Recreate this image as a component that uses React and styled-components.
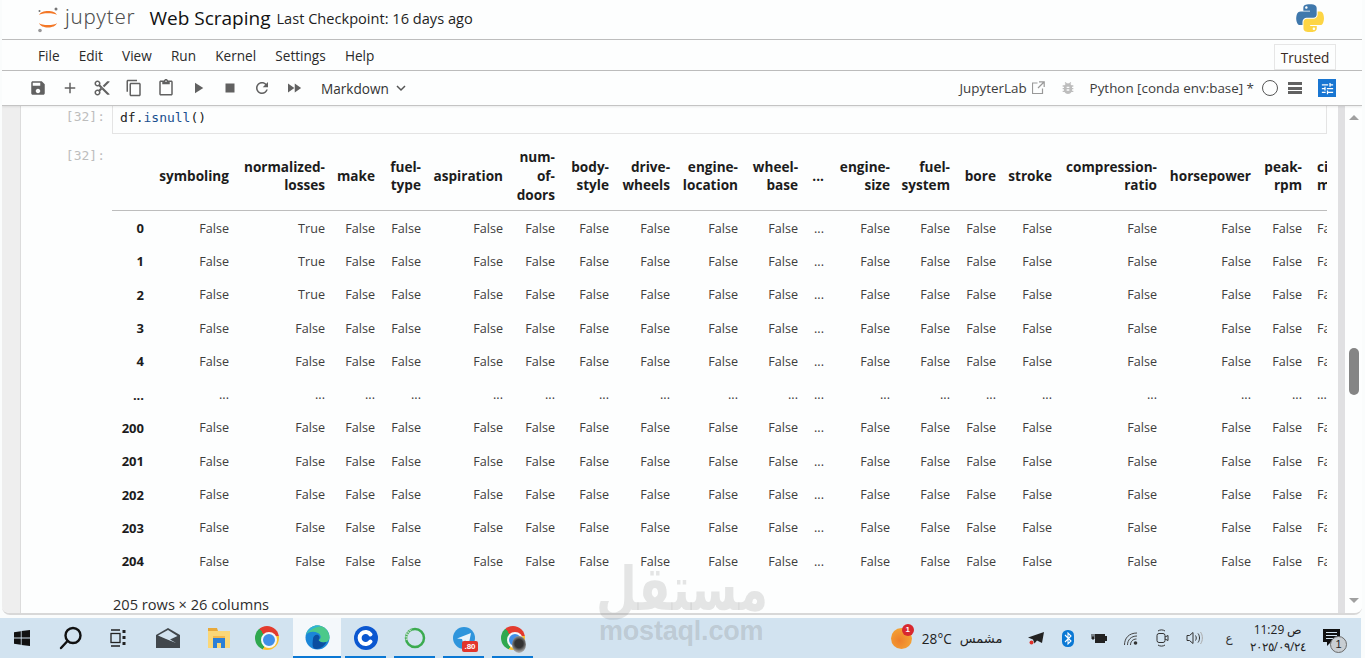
import React from 'react';
import styled, { createGlobalStyle } from 'styled-components';

const Global = createGlobalStyle`
  html, body { margin: 0; padding: 0; background: #fdfefe; overflow: hidden; }
  #root { width: 1365px; height: 658px; }
  * { box-sizing: border-box; }
`;

const UI = `"Open Sans", "Noto Sans", "Liberation Sans", sans-serif`;
const MONO = `"DejaVu Sans Mono", "Liberation Mono", monospace`;
const AR = `"DejaVu Sans", "Liberation Sans", sans-serif`;

const Page = styled.div`
  position: relative; width: 1365px; height: 658px; display: flex; flex-direction: column;
  overflow: hidden; font-family: ${UI}; background: #fafcfc;
`;
const Frame = styled.div`
  height: 615px; margin: 0 3px 3px 2px; display: flex; flex-direction: column; background: #fdfefe;
  border-bottom: 2px solid #d8d8d8; border-radius: 0 0 8px 8px; overflow: hidden; flex: none;
`;
const Header = styled.header`
  height: 40px; flex: none; display: flex; align-items: center; padding: 0 40px 4px 34px;
  border-bottom: 1px solid #bdbdbd;
`;
const LogoMark = styled.svg`width: 24px; height: 28px; margin-top: 3px; flex: none;`;
const LogoWord = styled.span`
  font-family: "Noto Sans", sans-serif; font-size: 20.5px; font-weight: 300; color: #4e4e4e; letter-spacing: .8px;
  margin-left: 5px; margin-top: -3px;
`;
const Title = styled.span`font-size: 19px; color: #111; margin-left: 14px; white-space: nowrap;`;
const Checkpoint = styled.span`font-size: 14.6px; color: #1f1f1f; margin-left: 6px; white-space: nowrap;`;
const PyLogo = styled.svg`width: 28px; height: 28px; margin-left: auto; margin-right: -2px;`;

const MenuBar = styled.nav`
  height: 31px; flex: none; display: flex; align-items: center; padding-left: 36px;
  border-bottom: 1px solid #bdbdbd; position: relative;
`;
const MenuItem = styled.span`font-size: 13.6px; color: #2a2a2a; margin-right: 19.2px;`;
const TrustedBox = styled.span`
  margin-left: auto; margin-right: 26px; margin-top: 4px; height: 26px; width: 62px; display: flex; align-items: center; justify-content: center;
  border: 1px solid #e6e6e6; font-size: 13.6px; color: #3a2a22; background: #fdfefe; position: relative; z-index: 1;
`;

const Toolbar = styled.div`
  height: 35px; flex: none; display: flex; align-items: center; padding: 0 26px 0 20px;
  border-bottom: 1px solid #c4c4c4; box-shadow: 0 1px 2px rgba(0,0,0,.08); position: relative; z-index: 2; background: #fdfefe;
`;
const ToolBtn = styled.span`width: 32px; height: 32px; display: flex; align-items: center; justify-content: center; flex: none;`;
const MatIcon = styled.svg`width: ${p => p.$s || 18}px; height: ${p => p.$s || 18}px; fill: ${p => p.$c || '#616161'}; flex: none;`;
const CellType = styled.span`font-size: 13.6px; color: #333; margin-left: 11px; display: flex; align-items: center; gap: 6px;`;
const Chevron = styled.svg`width: 12px; height: 12px; fill: none; stroke: #555; stroke-width: 1.5;`;
const ToolRight = styled.div`margin-left: auto; display: flex; align-items: center;`;
const KernelText = styled.span`font-size: 13.4px; color: #3c3c3c; white-space: nowrap; margin-left: ${p => p.$ml || 0}px;`;
const ExtIcon = styled.svg`width: 13px; height: 13px; margin: 0 15px 2px 5px; fill: none; stroke: #999; stroke-width: 1.2;`;
const StatusCircle = styled.span`width: 16px; height: 16px; border: 1.5px solid #555; border-radius: 50%; margin: 0 0 0 8px;`;
const Stack = styled.span`width: 14px; height: 12px; margin-left: 10px; display: flex; flex-direction: column; justify-content: space-between;`;
const StackBar = styled.i`display: block; height: 3px; background: #616161;`;
const Tune = styled.span`width: 18px; height: 18px; margin-left: 16px; background: #1976d2; display: flex; align-items: center; justify-content: center;`;

const Main = styled.main`flex: 1; min-height: 0; display: flex;`;
const GutterLeft = styled.div`width: 19px; flex: none; background: #eeeeee; border-right: 1px solid #dcdcdc; `;
const Sheet = styled.div`width: 1317px; flex: none; background: #fdfefe; position: relative; padding: 0 0 0 91px; overflow: hidden;`;
const GutterRight = styled.div`width: 7px; flex: none; background: #e0e0e2; `;
const Scrollbar = styled.div`flex: 1; background: #fdfefe; display: flex; flex-direction: column; align-items: center; padding: 9px 0 10px 0;`;
const ArrowUp = styled.i`width: 0; height: 0; border: 5px solid transparent; border-top: 0; border-bottom: 5px solid #a0a0a0;`;
const ArrowDown = styled.i`width: 0; height: 0; border: 5px solid transparent; border-bottom: 0; border-top: 5px solid #a0a0a0; margin-top: auto;`;
const Thumb = styled.i`width: 10px; height: 47px; background: #858585; border-radius: 5px; margin-top: 228px;`;

const Row = styled.div`display: flex; position: relative;`;
const Prompt = styled.span`
  position: absolute; right: calc(100% + 7px); top: ${p => p.$top}px;
  font: 13px/16px ${MONO}; color: #bdbdbd; white-space: nowrap;
`;
const InputBox = styled.div`
  width: 1215px; height: 28px; border: 1px solid #e4e4e4; border-top: 0; display: flex; align-items: center; padding: 0 0 4px 7px;
  font: 13px ${MONO}; color: #222; background: #fdfefe;
`;
const Method = styled.span`color: #1a4f8f;`;
const Output = styled.div`margin-top: 12px; width: 1215px; overflow: hidden; position: relative;`;
const Table = styled.table`border-collapse: collapse; table-layout: fixed; width: 1255px;`;
const Th = styled.th`
  padding: 0 5px 3px 0; text-align: ${p => p.$left ? 'left' : 'right'}; ${p => p.$left ? 'padding-left: 10px;' : ''}
  font-size: 13.6px; line-height: 18.6px; font-weight: 700; color: #1c1c1c; vertical-align: middle;
  height: 64px; border-bottom: 1px solid #bdbdbd; overflow: hidden;
`;
const Td = styled.td`
  padding: 3px 5px 0 0; text-align: ${p => p.$left ? 'left' : 'right'}; ${p => p.$left ? 'padding-left: 10px;' : ''}
  font-size: 12.6px; color: #3d3d3d; white-space: nowrap; overflow: hidden; height: 33.3px;
`;
const RowHead = styled(Td)`font-weight: 700; color: #1c1c1c; font-size: 13px;`;
const Shape = styled.div`
  margin: 18px 0 0 1px; font-size: 14.6px; color: #2d2d2d; line-height: 20px;
`;
const Mark = styled.div`
  position: absolute; left: 598px; top: 561px; width: 170px; z-index: 5; pointer-events: none; text-align: center; direction: rtl;
  font-family: ${AR}; font-weight: 700; font-size: 47px; line-height: 64px; color: rgba(130,130,130,.2); white-space: nowrap;
  transform: scaleY(1.3); transform-origin: 50% 70%;
`;
const MarkLatin = styled.div`
  position: absolute; left: 599px; top: 618px; width: 170px; z-index: 5; pointer-events: none;
  font-family: "Liberation Sans", sans-serif; font-weight: 700; font-size: 27px; line-height: 26px; color: rgba(120,120,120,.24); white-space: nowrap; letter-spacing: -.2px;
`;

const Taskbar = styled.footer`
  height: 40px; margin-right: 4px; flex: none; background: #d2e3f0; display: flex; align-items: stretch;
`;
const Slot = styled.div`
  width: ${p => p.$w || 49}px; flex: none; display: flex; align-items: center; justify-content: center; position: relative; padding-bottom: 1px;
  background: ${p => p.$active ? '#f4f8fb' : 'transparent'};
  &::after { content: ''; display: ${p => p.$line ? 'block' : 'none'}; position: absolute; bottom: 0; left: ${p => p.$active ? 0 : 4}px; right: ${p => p.$active ? 0 : 4}px; height: 2px; background: #0a78d4; }
`;
const Ico = styled.svg`width: ${p => p.$w || 24}px; height: ${p => p.$h || p.$w || 24}px; flex: none;`;
const ChromeBall = styled.span`
  width: 24px; height: 24px; border-radius: 50%; position: relative; display: block;
  background: conic-gradient(#e33b2e 0 80deg, #fbc02d 80deg 200deg, #2fa84f 200deg 320deg, #e33b2e 320deg);
  &::after { content: ''; position: absolute; left: 6px; top: 6px; width: 12px; height: 12px; border-radius: 50%; background: #3f8ee8; border: 2px solid #f3f7fa; }
`;
const AvatarDot = styled.span`position: absolute; left: 24px; top: 18px; width: 14px; height: 17px; border-radius: 50%; background: radial-gradient(circle at 50% 45%, #333 0 35%, #8a8a8a 62%, #ececec 100%);`;
const TgBadge = styled.span`
  position: absolute; left: 23px; top: 23px; width: 16px; height: 11px; background: #e2352d; color: #fff; border-radius: 2px;
  font: 700 8px/11px "Liberation Sans", sans-serif; text-align: center;
`;
const Tray = styled.div`margin-left: auto; display: flex; align-items: center; position: relative; padding-right: 5px;`;
const WeatherIcon = styled.span`
  width: 21px; height: 21px; border-radius: 50%; background: radial-gradient(circle at 40% 60%, #ee7f2a, #f6b23a); position: relative; display: block; margin-right: 10px;
`;
const WeatherBadge = styled.span`
  position: absolute; left: 11px; top: -4px; width: 12px; height: 12px; border-radius: 50%; background: #d8282f; color: #fff;
  font: 700 8px/12px "Liberation Sans", sans-serif; text-align: center;
`;
const TrayText = styled.span`font-size: 13.6px; color: #222; white-space: nowrap;`;
const ArText = styled.span`font-family: ${AR}; font-size: 13px; color: #222; white-space: nowrap; margin-left: 8px; margin-right: 18px; direction: rtl;`;
const TrayIcon = styled.span`width: 31.6px; display: flex; justify-content: center; flex: none;`;
const Lang = styled.span`font-family: ${AR}; font-size: 12px; color: #333; width: 30px; text-align: center; margin-left: 4px;`;
const Clock = styled.div`
  width: 56px; margin-left: 6px; display: flex; flex-direction: column; align-items: center; font-size: 12px; line-height: 17px; color: #222; font-family: ${UI};
`;
const Notify = styled.span`width: 50px; height: 100%; display: flex; align-items: center; justify-content: center; position: relative;`;
const NotifyBadge = styled.span`
  position: absolute; left: 24px; top: 18px; width: 17px; height: 17px; border-radius: 50%; background: #c8ced3; border: 1px solid #6a6a6a; color: #222;
  font: 11px/15px "Liberation Sans", sans-serif; text-align: center;
`;

const P = {
  save: 'M17 3H5c-1.11 0-2 .9-2 2v14c0 1.1.89 2 2 2h14c1.1 0 2-.9 2-2V7l-4-4zm-5 16c-1.66 0-3-1.34-3-3s1.34-3 3-3 3 1.34 3 3-1.34 3-3 3zm3-10H5V5h10v4z',
  add: 'M19 13h-6v6h-2v-6H5v-2h6V5h2v6h6v2z',
  cut: 'M9.64 7.64c.23-.5.36-1.05.36-1.64 0-2.21-1.79-4-4-4S2 3.79 2 6s1.79 4 4 4c.59 0 1.14-.13 1.64-.36L10 12l-2.36 2.36C7.14 14.13 6.59 14 6 14c-2.21 0-4 1.79-4 4s1.79 4 4 4 4-1.79 4-4c0-.59-.13-1.14-.36-1.64L12 14l7 7h3v-1L9.64 7.64zM6 8c-1.1 0-2-.89-2-2s.9-2 2-2 2 .89 2 2-.9 2-2 2zm0 12c-1.1 0-2-.89-2-2s.9-2 2-2 2 .89 2 2-.9 2-2 2zm6-7.5c-.28 0-.5-.22-.5-.5s.22-.5.5-.5.5.22.5.5-.22.5-.5.5zM19 3l-6 6 2 2 7-7V3z',
  copy: 'M16 1H4c-1.1 0-2 .9-2 2v14h2V3h12V1zm3 4H8c-1.1 0-2 .9-2 2v14c0 1.1.9 2 2 2h11c1.1 0 2-.9 2-2V7c0-1.1-.9-2-2-2zm0 16H8V7h11v14z',
  paste: 'M19 2h-4.18C14.4.84 13.3 0 12 0c-1.3 0-2.4.84-2.82 2H5c-1.1 0-2 .9-2 2v16c0 1.1.9 2 2 2h14c1.1 0 2-.9 2-2V4c0-1.1-.9-2-2-2zm-7 0c.55 0 1 .45 1 1s-.45 1-1 1-1-.45-1-1 .45-1 1-1zm7 18H5V4h2v3h10V4h2v16z',
  play: 'M8 5v14l11-7z',
  stop: 'M6 6h12v12H6z',
  refresh: 'M17.65 6.35C16.2 4.9 14.21 4 12 4c-4.42 0-7.99 3.58-7.99 8s3.57 8 7.99 8c3.73 0 6.84-2.55 7.73-6h-2.08c-.82 2.33-3.04 4-5.65 4-3.31 0-6-2.69-6-6s2.69-6 6-6c1.66 0 3.14.69 4.22 1.78L13 11h7V4l-2.35 2.35z',
  ff: 'M4 18l8.5-6L4 6v12zm9-12v12l8.5-6L13 6z',
  bug: 'M20 8h-2.81c-.45-.78-1.07-1.45-1.82-1.96L17 4.41 15.59 3l-2.17 2.17C12.96 5.06 12.49 5 12 5c-.49 0-.96.06-1.41.17L8.41 3 7 4.41l1.62 1.63C7.88 6.55 7.26 7.22 6.81 8H4v2h2.09c-.05.33-.09.66-.09 1v1H4v2h2v1c0 .34.04.67.09 1H4v2h2.81c1.04 1.79 2.97 3 5.19 3s4.15-1.21 5.19-3H20v-2h-2.09c.05-.33.09-.66.09-1v-1h2v-2h-2v-1c0-.34-.04-.67-.09-1H20V8zm-6 8h-4v-2h4v2zm0-4h-4v-2h4v2z',
  tune: 'M3 17v2h6v-2H3zM3 5v2h10V5H3zm10 16v-2h8v-2h-8v-2h-2v6h2zM7 9v2H3v2h4v2h2V9H7zm14 4v-2H11v2h10zm-6-4h2V7h4V5h-4V3h-2v6z',
};
const Mi = ({ n, s, c }) => <MatIcon viewBox="0 0 24 24" $s={s} $c={c}><path d={P[n]} /></MatIcon>;

const columns = [
  ['', 37], ['symboling', 85], [['normalized-', 'losses'], 96], ['make', 50], [['fuel-', 'type'], 46], ['aspiration', 82],
  [['num-', 'of-', 'doors'], 52], [['body-', 'style'], 54], [['drive-', 'wheels'], 61], [['engine-', 'location'], 68], [['wheel-', 'base'], 60],
  ['...', 26], [['engine-', 'size'], 66], [['fuel-', 'system'], 60], ['bore', 46], ['stroke', 56], [['compression-', 'ratio'], 105],
  ['horsepower', 94], [['peak-', 'rpm'], 51], [['city-', 'mpg'], 60],
];
const rows = ['0', '1', '2', '3', '4', '...', '200', '201', '202', '203', '204'];
const cellValue = (r, c) => {
  if (r === '...' || c === 11) return '...';
  if (c === 2 && (r === '0' || r === '1' || r === '2')) return 'True';
  return 'False';
};

const Label = ({ v }) => Array.isArray(v) ? v.map((l, i) => <React.Fragment key={i}>{l}{i < v.length - 1 && <br />}</React.Fragment>) : v;

const Jupyter = () => (
  <LogoMark viewBox="0 0 24 28">
    <path d="M3 10C5 4.500 19 4.500 21 10 18.500 7.800 5.500 7.800 3 10Z" fill="#f37726" />
    <path d="M3 18C5 24 19 24 21 18 18.500 20.800 5.500 20.800 3 18Z" fill="#f37726" />
    <circle cx="20" cy="4" r="1.500" fill="#767677" /><circle cx="4" cy="25.500" r="1.800" fill="#989798" /><circle cx="3.500" cy="6" r="1" fill="#6f7070" />
  </LogoMark>
);

const Python = () => (
  <PyLogo viewBox="0 0 110 110">
    <path fill="#3f78ac" d="M54.9.9c-4.6 0-8.9.4-12.8 1.1C30.8 4 28.8 8.2 28.8 15.9v10.2h26.2v3.4H19c-7.6 0-14.3 4.6-16.4 13.3C.2 52.8.1 59 2.6 69.4c1.9 7.7 6.3 13.3 13.9 13.3h9v-12c0-8.7 7.5-16.3 16.4-16.3h26.2c7.3 0 13.1-6 13.1-13.3V15.9c0-7.1-6-12.4-13.1-13.6C63.5 1.3 59.1.9 54.9.9zM40.7 9c2.7 0 4.9 2.2 4.9 5 0 2.7-2.2 4.9-4.9 4.9-2.7 0-4.9-2.2-4.9-4.9 0-2.7 2.2-5 4.9-5z" />
    <path fill="#fdd545" d="M85 29.5v11.6c0 9-7.6 16.6-16.4 16.6H42.4c-7.2 0-13.1 6.1-13.1 13.3v25c0 7.1 6.2 11.3 13.1 13.3 8.3 2.4 16.3 2.9 26.2 0 6.6-1.9 13.1-5.8 13.1-13.3V86H55.5v-3.4h39.3c7.6 0 10.5-5.3 13.1-13.3 2.7-8.2 2.6-16.1 0-26.6C106 35.2 102.4 29.5 94.8 29.5H85zM70.3 92.5c2.7 0 4.9 2.2 4.9 4.9 0 2.7-2.2 5-4.9 5-2.7 0-4.9-2.2-4.9-5 0-2.7 2.2-4.9 4.9-4.900z" />
  </PyLogo>
);

export default function App() {
  return (
    <Page>
      <Global />
      <Frame>
        <Header>
          <Jupyter />
          <LogoWord>jupyter</LogoWord>
          <Title>Web Scraping</Title>
          <Checkpoint>Last Checkpoint: 16 days ago</Checkpoint>
          <Python />
        </Header>
        <MenuBar>
          {['File', 'Edit', 'View', 'Run', 'Kernel', 'Settings', 'Help'].map(m => <MenuItem key={m}>{m}</MenuItem>)}
          <TrustedBox>Trusted</TrustedBox>
        </MenuBar>
        <Toolbar>
          <ToolBtn><Mi n="save" /></ToolBtn>
          <ToolBtn><Mi n="add" /></ToolBtn>
          <ToolBtn><Mi n="cut" /></ToolBtn>
          <ToolBtn><Mi n="copy" /></ToolBtn>
          <ToolBtn><Mi n="paste" /></ToolBtn>
          <ToolBtn><Mi n="play" /></ToolBtn>
          <ToolBtn><Mi n="stop" /></ToolBtn>
          <ToolBtn><Mi n="refresh" /></ToolBtn>
          <ToolBtn><Mi n="ff" /></ToolBtn>
          <CellType>Markdown<Chevron viewBox="0 0 12 12"><path d="M2 4l4 4 4-4" /></Chevron></CellType>
          <ToolRight>
            <KernelText>JupyterLab</KernelText>
            <ExtIcon viewBox="0 0 13 13"><path d="M10.5 7.5v5h-10V2h5M7 .8h5.2V6M12 1 6 7" /></ExtIcon>
            <Mi n="bug" s={16} c="#bdbdbd" />
            <KernelText $ml={14}>Python [conda env:base] *</KernelText>
            <StatusCircle />
            <Stack><StackBar /><StackBar /><StackBar /></Stack>
            <Tune><Mi n="tune" s={15} c="#fff" /></Tune>
          </ToolRight>
        </Toolbar>
        <Main>
          <GutterLeft />
          <Sheet>
            <Row>
              <Prompt $top={3}>[32]:</Prompt>
              <InputBox>df.<Method>isnull</Method>()</InputBox>
            </Row>
            <Row>
              <Prompt $top={14}>[32]:</Prompt>
              <div>
                <Output>
                  <Table>
                    <colgroup>{columns.map((c, i) => <col key={i} style={{ width: c[1] }} />)}</colgroup>
                    <thead>
                      <tr>{columns.map((c, i) => <Th key={i} $left={i === 19}><Label v={c[0]} /></Th>)}</tr>
                    </thead>
                    <tbody>
                      {rows.map(r => (
                        <tr key={r}>
                          <RowHead as="td">{r}</RowHead>
                          {columns.slice(1).map((c, i) => <Td key={i} $left={i === 18}>{cellValue(r, i + 1)}</Td>)}
                        </tr>
                      ))}
                    </tbody>
                  </Table>
                </Output>
                <Shape>205 rows × 26 columns</Shape>
              </div>
            </Row>
          </Sheet>
          <GutterRight />
          <Scrollbar><ArrowUp /><Thumb /><ArrowDown /></Scrollbar>
        </Main>
      </Frame>
      <Taskbar>
        <Slot $w={44}>
          <Ico $w={16} viewBox="0 0 16 16" fill="#111"><path d="M0 2.200 6.800 1.200v6.400H0zM7.600 1.100 16 0v7.600H7.600zM0 8.400h6.800v6.400L0 13.800zM7.600 8.400H16V16l-8.400-1.100z" /></Ico>
        </Slot>
        <Slot $w={54}>
          <Ico $w={26} viewBox="0 0 26 26" fill="none" stroke="#111" strokeWidth="2.400"><circle cx="15" cy="10.500" r="7.500" /><path d="M9.500 16 3 23" strokeLinecap="round" /></Ico>
        </Slot>
        <Slot $w={40}>
          <Ico $w={18} viewBox="0 0 18 18" fill="none" stroke="#222" strokeWidth="1.300"><path d="M2 1h9M2 17h9" /><rect x="2" y="4.500" width="9" height="9" /><rect x="13.500" y="1" width="3" height="3" fill="#222" stroke="none" /><rect x="13.500" y="7" width="3" height="3" fill="#222" stroke="none" /><rect x="13.500" y="13" width="3" height="3" fill="#222" stroke="none" /></Ico>
        </Slot>
        <Slot $w={60}>
          <Ico $w={24} $h={20} viewBox="0 0 24 20"><path d="M0 7 12 0l12 7v13H0z" fill="#41474c" /><path d="M2 7.500 12 2l9.500 6L14 11.500 20 15 10 11z" fill="#d2e3f0" /><path d="M1 8l10 4 9 4H1z" fill="#41474c" /></Ico>
        </Slot>
        <Slot $w={42}>
          <Ico $w={22} $h={20} viewBox="0 0 22 20"><path d="M0 0h9l1 3h12v17H0z" fill="#e8a93a" /><path d="M0 3h22v17H0z" fill="#fbd777" /><path d="M5 10h12v10h-4v-5H9v5H5z" fill="#2c7fd6" /><path d="M5 8h12v2H5z" fill="#f5b84a" /></Ico>
        </Slot>
        <Slot $w={53}><ChromeBall /></Slot>
        <Slot $active $line $w={48}>
          <Ico $w={25} viewBox="0 0 25 25">
            <circle cx="12.500" cy="12.500" r="12" fill="#1b86d8" />
            <path d="M1 10C3 3 8 .5 12.500.5 19 .5 24.500 6 24.500 12.500c0 3-3 5-6 5-2.500 0-5-1-5-2.500 3-1 3-5-.5-7C9 6 3 6.500 1 10z" fill="#4cc98a" />
            <path d="M1 10C3 3 8 .5 12.500.5c2 0 3 .3 4 .8C13 1.500 6 3 1 10z" fill="#2fb3d8" />
            <path d="M8 14c0-3 3-5 5-4 2 1 2 3.500.5 5 1 2 4 3 8 2-2 4-6 7-10 7-5 0-4-6-3.500-10z" fill="#0c4fa0" />
          </Ico>
        </Slot>
        <Slot $line>
          <Ico $w={24} viewBox="0 0 24 24"><circle cx="12" cy="12" r="12" fill="#0b57d0" /><path d="M16.500 8.500a6 6 0 1 0 0 7" fill="none" stroke="#fff" strokeWidth="4" strokeLinecap="round" /></Ico>
        </Slot>
        <Slot $line>
          <Ico $w={22} viewBox="0 0 22 22" fill="none"><circle cx="11" cy="11" r="9" stroke="#3bab4f" strokeWidth="2.500" /><path d="M3 13C1.500 8 4 3.500 8 2.500" stroke="#b8d8be" strokeWidth="2.500" strokeDasharray="1.500 1" /></Ico>
        </Slot>
        <Slot $line>
          <Ico $w={22} viewBox="0 0 22 22"><circle cx="11" cy="11" r="11" fill="#2f95dc" /><path d="M4 11.500 18 6l-2 10-4-2.500-2 2-1-3.500z" fill="#eaf4fb" /></Ico>
          <TgBadge>.80</TgBadge>
        </Slot>
        <Slot $line><ChromeBall /><AvatarDot /></Slot>
        <Tray>
          <WeatherIcon><WeatherBadge>1</WeatherBadge></WeatherIcon>
          <TrayText>28°C</TrayText>
          <ArText>مشمس</ArText>
          <TrayIcon><Ico $w={16} $h={13} viewBox="0 0 16 13"><path d="M16 0 0 5.500l5 2 1.500 4 2.500-3 5 2.500z" fill="#222" /><circle cx="3.500" cy="10.500" r="2" fill="#e0322b" /></Ico></TrayIcon>
          <TrayIcon><Ico $w={12} $h={17} viewBox="0 0 12 17"><rect width="12" height="17" rx="5.500" fill="#0a78d4" /><path d="M3 5l6 6-3 3V3l3 3-6 6" fill="none" stroke="#fff" strokeWidth="1.100" /></Ico></TrayIcon>
          <TrayIcon><Ico $w={16} $h={11} viewBox="0 0 16 11"><path d="M4 1h10v2h2v5h-2v2H4z" fill="#222" /><path d="M0 5h4M1 1v3M3 1v3" stroke="#222" fill="none" /><rect x="1" y="3.500" width="2" height="3" fill="#222" /></Ico></TrayIcon>
          <TrayIcon><Ico $w={14} $h={13} viewBox="0 0 14 13" fill="none" stroke="#444" strokeWidth="1"><path d="M.5 13C.5 6 5 1 13 1M3.500 13C3.500 8 7 4 13 4M6.500 13c0-3 2-6 6-6" /><circle cx="11.500" cy="11" r="1.800" fill="#333" stroke="none" /></Ico></TrayIcon>
          <TrayIcon><Ico $w={13} $h={18} viewBox="0 0 13 18" fill="none" stroke="#333" strokeWidth="1"><rect x="1" y="4.500" width="8" height="9" rx="2" /><path d="M9 8l3-1.500v5L9 10M2 2c2-1.500 5-1.500 7 0M2 16c2 1.500 5 1.500 7 0" /></Ico></TrayIcon>
          <TrayIcon><Ico $w={17} $h={14} viewBox="0 0 17 14" fill="none" stroke="#333" strokeWidth="1"><path d="M1 4.500h2.500L7 1.500v11l-3.500-3H1zM9.500 4.500c1 1.500 1 3.500 0 5M12 2.500c2 2.500 2 6.500 0 9" /><path d="M14.500 1c2.500 3.500 2.500 8.500 0 12" stroke="#aaa" /></Ico></TrayIcon>
          <Lang>ع</Lang>
          <Clock>
            <span dir="ltr">11:29 ص</span>
            <span dir="ltr">٢٠٢٥/٠٩/٢٤</span>
          </Clock>
          <Notify>
            <Ico $w={17} $h={18} viewBox="0 0 17 18"><path d="M0 0h17v13H8l-4 4v-4H0z" fill="#111" /><path d="M3 3.500h11M3 6.500h11M3 9.500h7" stroke="#d2e3f0" strokeWidth="1" /></Ico>
            <NotifyBadge>1</NotifyBadge>
          </Notify>
        </Tray>
      </Taskbar>
      <Mark>مستقل</Mark>
      <MarkLatin>mostaql.com</MarkLatin>
    </Page>
  );
}
